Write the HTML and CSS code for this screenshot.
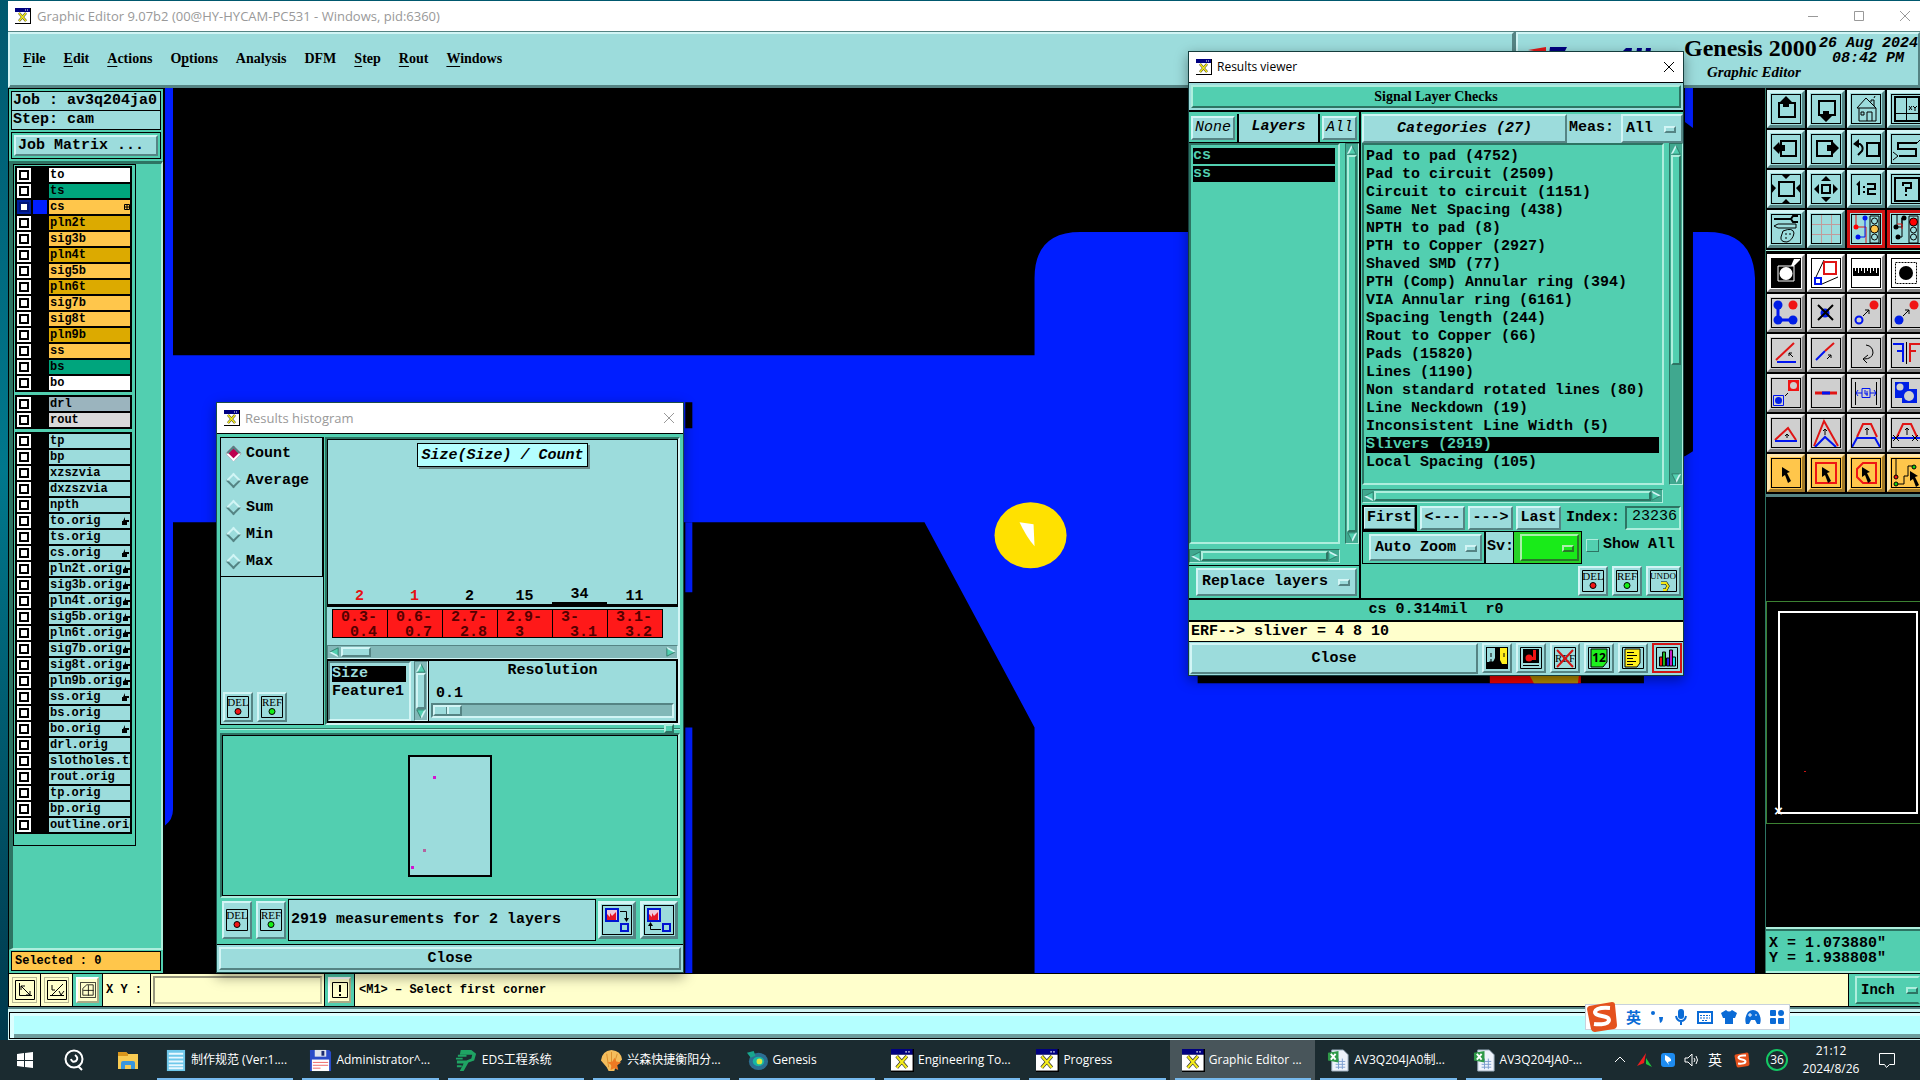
FILE: index.html
```html
<!DOCTYPE html>
<html lang="en">
<head>
    <meta charset="UTF-8">
    <meta name="viewport" content="width=device-width, initial-scale=1.0">
    <title>Graphic Editor</title>
    <link rel="stylesheet" href="styles.css">
</head>
<body>
    <!-- shared icons -->
    <svg class="defs" aria-hidden="true">
        <symbol id="x-app" viewBox="0 0 16 16"><path d="M0 0h16v16H0z" fill="#000"/><path d="M0 0h15v4H0z" fill="#000080"/><path d="M10 2h1m1 0h1" stroke="#fff"/><path d="M0 4h15v11H0z" fill="#fff"/><path d="M4 5l7 8M11 5l-7 8" stroke="#333" stroke-width="2.500"/><path d="M4 5l7 8M11 5l-7 8" stroke="#f5ec1a" stroke-width="1.500"/></symbol>
        <symbol id="del" viewBox="0 0 22 22"><path d="M.5.5h21v21H.5z" fill="none" stroke="#000"/><text x="11" y="10" class="tiny">DEL</text><circle cx="11" cy="15.500" r="3" fill="#f01414" stroke="#000"/></symbol>
        <symbol id="ref" viewBox="0 0 22 22"><path d="M.5.5h21v21H.5z" fill="none" stroke="#000"/><text x="11" y="10" class="tiny">REF</text><circle cx="11" cy="15.500" r="3" fill="#14f014" stroke="#000"/></symbol>
        <symbol id="tri" viewBox="0 0 12 12"><path d="M6 1l5 10H1z" class="tri-face"/><path d="M6 1L1 11" class="tri-light"/><path d="M6 1l5 10H1" class="tri-dark"/></symbol>
        <symbol id="arrow" viewBox="0 0 30 30"><path d="M11 9l8 5-3 1 4 8-3 2-3-8-3 2z"/></symbol>
        <symbol id="hand" viewBox="0 0 8 8"><path d="M4 0v3h4v2H6v3H1V4h1z"/></symbol>
        <symbol id="grid-mark" viewBox="0 0 6 6"><path d="M.5.5h5v5h-5zM3 0v6M0 3h6" fill="none" stroke="#000"/></symbol>
        <symbol id="sogou" viewBox="0 0 32 32"><path d="M3 5l23-4q3 0 3 3l2 20q0 3-3 4L9 31q-3 0-4-3L1 8q0-2 2-3z" fill="#e4511d"/><path d="M24 7q-14-1-15 4c0 5 14 3 14 8 0 6-15 4-15 4" fill="none" stroke="#fff" stroke-width="4"/></symbol>
        <symbol id="excel" viewBox="0 0 24 24"><path d="M5 1h12l5 5v17H5z" fill="#eef3fb" stroke="#9ab"/><path d="M9 13h10M9 16h10M9 19h10M12 10v11M16 10v11" stroke="#7d9fd0"/><path d="M1 4l11-2v12L1 12z" fill="#2f9a48"/><path d="M4 5l5 6M9 5l-5 6" stroke="#fff" stroke-width="2"/></symbol>
    </svg>

    <div class="desktop">
        <main class="app">
            <header class="title-bar">
                <svg class="app-icon"><use href="#x-app"/></svg>
                <span class="caption">Graphic Editor 9.07b2 (00@HY-HYCAM-PC531 - Windows, pid:6360)</span>
                <button class="win-btn" aria-label="Minimize"><svg viewBox="0 0 12 12"><path d="M1 6.500h10"/></svg></button>
                <button class="win-btn" aria-label="Maximize"><svg viewBox="0 0 12 12"><path d="M1.500 1.500h9v9h-9z"/></svg></button>
                <button class="win-btn" aria-label="Close"><svg viewBox="0 0 12 12"><path d="M1 1l10 10M11 1L1 11"/></svg></button>
            </header>

            <div class="top">
                <nav class="menu bevel">
                    <a href="#"><u>F</u>ile</a>
                    <a href="#"><u>E</u>dit</a>
                    <a href="#"><u>A</u>ctions</a>
                    <a href="#">O<u>p</u>tions</a>
                    <a href="#">Analysis</a>
                    <a href="#">DFM</a>
                    <a href="#"><u>S</u>tep</a>
                    <a href="#"><u>R</u>out</a>
                    <a href="#"><u>W</u>indows</a>
                </nav>
                <div class="brand bevel">
                    <svg class="logo" viewBox="0 0 160 30"><path d="M4 3L22 0v10H8l8-5z" fill="#e01818"/><path d="M26 0h17l-2 4H32v4h9v4H31v10h-8z" fill="#000080"/><path d="M98 5l4-4h6l-3 22h-6zM113 1h5l-3 22h-5zM122 1h5l-3 22h-5z" fill="#000080"/></svg>
                    <div class="product">
                        <h1>Genesis 2000</h1>
                        <p>Graphic Editor</p>
                    </div>
                    <div class="date"><p>26 Aug 2024</p><p>08:42 PM</p></div>
                </div>
            </div>

            <div class="work">
                <aside class="side">
                    <div class="job">
                        <p class="field">Job : av3q204ja0</p>
                        <p class="field">Step: cam</p>
                        <div class="matrix"><button class="btn">Job Matrix ...</button></div>
                    </div>
                    <div class="layers-area">
                        <div class="layers" id="layers"></div>
                    </div>
                    <p class="selected">Selected : 0</p>
                </aside>

                <svg class="canvas" viewBox="0 0 1599 885" preserveAspectRatio="xMinYMin slice">
                    <path d="M0 0h8v267h861V190q0-46 46-46h626q46 0 48 46v695H869V639L759 434H8v287q0 10-8 16z" fill="#001eff"/>
                    <path d="M1060 0h467v363l-8 5h-459z"/>
                    <path d="M1519 0h8v40l-8-6zM520 504h7v-70h-7zM520 639h7v246h-7z" fill="#001eff"/>
                    <path d="M520 314h7v26h-7zM1032 580h446v15h-446z"/>
                    <path d="M1324 580h91v15h-91z" fill="#f00000"/>
                    <path d="M1360 580h54l-2 15h-44z" fill="#b48c00"/>
                    <ellipse cx="865" cy="447" rx="36" ry="33" fill="#ffe100"/>
                    <path d="M854 434l14 2 1 22q-8-9-15-24z" fill="#fff"/>
                </svg>

                <aside class="tools">
                    <div class="tool-grid">
                        <button class="tool" aria-label="Pan up"><svg viewBox="0 0 30 30"><path class="s2" d="M8 9h16v14H8z"/><path d="M15 2l6 6-3 1v4h-6V9L9 8z"/></svg></button>
                        <button class="tool" aria-label="Pan down"><svg viewBox="0 0 30 30"><path class="s2" d="M8 7h16v14H8z"/><path d="M15 28l6-6-3-1v-4h-6v4l-3 1z"/></svg></button>
                        <button class="tool" aria-label="Home"><svg viewBox="0 0 30 30"><path class="s1" d="M6 14L15 4l10 10zM8 14v13h17V14M16 27v-9h5v9M10 18h3v3h-3zM20 8V6h3v6M23 4l1-2"/></svg></button>
                        <button class="tool" aria-label="Coordinates"><svg viewBox="0 0 30 30"><path class="s2" d="M4 3h24v24H4z"/><path class="s1" d="M15.500 3v24M4 19.500h24M18 12l3 4m0-4l-3 4M22 12l2 2 2-2M24 14v3"/></svg></button>
                        <button class="tool" aria-label="Pan left"><svg viewBox="0 0 30 30"><path class="s2" d="M10 7h15v15H10z"/><path d="M2 14l6-6 1 3h5v6H9l-1 3z"/></svg></button>
                        <button class="tool" aria-label="Pan right"><svg viewBox="0 0 30 30"><path class="s2" d="M6 7h15v15H6z"/><path d="M28 14l-6-6-1 3h-5v6h5l1 3z"/></svg></button>
                        <button class="tool" aria-label="Previous view"><svg viewBox="0 0 30 30"><path class="s2" d="M16 9h12v13H16zM5 10h4q4 3 2 7l-4 4"/><path d="M2 10l6-5v9z"/></svg></button>
                        <button class="tool" aria-label="Serpentine"><svg viewBox="0 0 30 30"><path class="s2" d="M26 9H7v6h18v7H8"/><path class="s1" d="M30 5l-4 4M2 18l5 4-5 4"/></svg></button>
                        <button class="tool" aria-label="Zoom in"><svg viewBox="0 0 30 30"><path class="s2" d="M8 8h15v14H8z"/><path d="M10 0h10l-5 5zM10 30h10l-5-5zM0 9l5 5-5 6zM30 9l-5 5 5 6z"/></svg></button>
                        <button class="tool" aria-label="Zoom out"><svg viewBox="0 0 30 30"><path class="s2" d="M11 11h8v8h-8z"/><path d="M10 7l5-5 5 5zM10 23l5 5 5-5zM8 10l-5 5 5 5zM22 10l5 5-5 5z"/></svg></button>
                        <button class="tool" aria-label="Scale 1:2"><svg viewBox="0 0 30 30"><path class="s2" d="M6 11l2-2v12M13 12v2m0 3v2M16 10h8v5h-7v5h8"/></svg></button>
                        <button class="tool" aria-label="Help"><svg viewBox="0 0 30 30"><path class="s2" d="M4 4h24v23H4zM12 12V9h8v5h-5v4M15 20v2"/></svg></button>
                        <button class="tool" aria-label="Setup"><svg viewBox="0 0 30 30"><path class="s2" d="M3 5h17M27 2h-5l-2 3 2 3h5"/><path class="s1" d="M3 12l4-2h18v4H7zM12 17q10-4 11 2-1 7-7 9-7 0-6-5zM14 20h2m2 0h2m-6 4h2"/></svg></button>
                        <button class="tool" aria-label="Grid"><svg viewBox="0 0 30 30"><path d="M10.500 0v30M20.500 0v30M0 10.500h30M0 20.500h30" fill="none" stroke="#c29a9a"/></svg></button>
                        <button class="tool red" aria-label="Net check"><svg viewBox="0 0 30 30"><path d="M5 0v13h10v16" fill="none" stroke="#e01414"/><path d="M14 4v19H7" fill="none" stroke="#0014f0"/><circle cx="5" cy="13" r="2.500" fill="#f00"/><circle cx="14" cy="4" r="2.500" fill="#0014f0"/><circle cx="7" cy="23" r="2.500" fill="#0014f0"/><path class="s1" d="M19 2h9v27h-9z"/><circle class="s1" cx="23.500" cy="7" r="3"/><circle cx="23.500" cy="15" r="4" fill="#ffc64b" stroke="#000"/><circle class="s1" cx="23.500" cy="23" r="3"/></svg></button>
                        <button class="tool red" aria-label="Short check"><svg viewBox="0 0 30 30"><path d="M6 0v13h5V4M11 4v19H7" class="s1"/><path d="M6 10h5v5" fill="none" stroke="#e01414"/><circle cx="5" cy="13" r="2.500"/><circle cx="13" cy="4" r="2.500"/><circle cx="7" cy="23" r="2.500"/><path class="s1" d="M18 2h9v27h-9z"/><circle cx="22.500" cy="8" r="4" fill="#f00" stroke="#000"/><circle class="s1" cx="22.500" cy="16" r="3"/><circle class="s1" cx="22.500" cy="23" r="3"/></svg></button>
                    </div>
                    <div class="tool-grid gray">
                        <button class="tool on" aria-label="Add pad"><svg viewBox="0 0 30 30"><path d="M0 0h30v30H0z"/><path d="M20 8l3-7h7l-7 7z" fill="#fff"/><path d="M7 8h16v15H7z" fill="none" stroke="#fff"/><circle cx="15" cy="15.500" r="6.500" fill="#fff"/></svg></button>
                        <button class="tool on" aria-label="Copy"><svg viewBox="0 0 30 30"><path class="s1" d="M5 19L13 2M11 26l16-7"/><path d="M13 4h12v12H13z" fill="none" stroke="#e01414" stroke-width="2"/><path d="M4 20h6v6H4z" fill="none" stroke="#0014f0" stroke-width="2"/></svg></button>
                        <button class="tool on" aria-label="Measure"><svg viewBox="0 0 30 30"><path d="M2 10h26v8H2z"/><path d="M4.500 10v3m3-3v5m3-5v3m3-3v5m3-5v3m3-3v5m3-5v3m3-3v5" stroke="#fff"/></svg></button>
                        <button class="tool on" aria-label="Select pad"><svg viewBox="0 0 30 30"><path class="s1" stroke-dasharray="2 1" d="M4.500 4.500h21v21h-21z"/><circle cx="15" cy="15" r="7"/></svg></button>
                        <button class="tool" aria-label="Chain"><svg viewBox="0 0 30 30"><path d="M7 7v15h16" fill="none" stroke="#0014f0" stroke-width="3"/><g fill="#001ee6"><circle cx="7" cy="7" r="4.500"/><circle cx="7" cy="22" r="4.500"/><circle cx="22" cy="22" r="4.500"/></g><circle cx="22" cy="7" r="4.500" fill="#f01414"/></svg></button>
                        <button class="tool" aria-label="Delete"><svg viewBox="0 0 30 30"><circle cx="14" cy="15" r="4.500" fill="#001ee6"/><path class="s2" d="M7 7l15 15M22 7L7 22"/></svg></button>
                        <button class="tool" aria-label="Move"><svg viewBox="0 0 30 30"><circle cx="8" cy="22" r="3.500" fill="none" stroke="#0014f0" stroke-width="2"/><circle cx="23" cy="7" r="4.500" fill="#f01414"/><path class="s1" d="M12 18l6-6m-4 0h4v4"/></svg></button>
                        <button class="tool" aria-label="Copy pad"><svg viewBox="0 0 30 30"><circle cx="8" cy="22" r="4.500" fill="#001ee6"/><circle cx="23" cy="7" r="4.500" fill="#f01414"/><path class="s1" d="M12 18l6-6m-4 0h4v4"/></svg></button>
                        <button class="tool" aria-label="Rotate"><svg viewBox="0 0 30 30"><path d="M5 22L23 5" stroke="#e01414" stroke-width="2"/><path d="M6 24h19" stroke="#0014f0" stroke-width="2"/><path class="s1" d="M22 19l-4-4m0 3v-3h3"/></svg></button>
                        <button class="tool" aria-label="Extend"><svg viewBox="0 0 30 30"><path d="M5 22l9-9" stroke="#0014f0" stroke-width="2"/><path d="M14 13l9-8" stroke="#e01414" stroke-width="2"/><path class="s1" d="M16 21l4-4m-3 0h3v3"/></svg></button>
                        <button class="tool" aria-label="Turn"><svg viewBox="0 0 30 30"><path class="s1" d="M15 7q7 1 7 8-1 6-9 6m4-4l-5 4 4 4"/></svg></button>
                        <button class="tool" aria-label="Mirror"><svg viewBox="0 0 30 30"><path d="M2 6h10v18M6 13h6" fill="none" stroke="#0014f0" stroke-width="2"/><path class="s1" d="M15.500 4v22"/><path d="M29 6H19v18M19 13h6" fill="none" stroke="#e01414" stroke-width="2"/></svg></button>
                        <button class="tool" aria-label="Resize"><svg viewBox="0 0 30 30"><path d="M17 2h11v11H17z" fill="#f01414"/><circle cx="22.500" cy="7.500" r="3.500" fill="#cfcfcf"/><path d="M2.500 17.500h10v10h-10z" fill="none" stroke="#0014f0"/><circle cx="7.500" cy="22.500" r="3.500" fill="#001ee6"/><path class="s1" d="M14 18l3-3"/></svg></button>
                        <button class="tool" aria-label="Line"><svg viewBox="0 0 30 30"><path d="M4 15h22" stroke="#e01414" stroke-width="3"/><path d="M11 15h8" stroke="#0014f0" stroke-width="3"/></svg></button>
                        <button class="tool" aria-label="Spacing"><svg viewBox="0 0 30 30"><path class="s1" d="M4.500 4v23M25.500 4v23"/><path d="M5 15h6m-4-3l-2 3 2 3M25 15h-6m4-3l2 3-2 3M11 10.500h8v9h-8zM14 12v4h3M16 13v5" fill="none" stroke="#0014f0"/></svg></button>
                        <button class="tool" aria-label="Contour"><svg viewBox="0 0 30 30"><path d="M4 4h14v7h8v14H11v-5H4z" fill="#001ee6"/><circle cx="9" cy="9" r="3.500" fill="#cfcfcf"/><circle cx="18" cy="18" r="5" fill="#cfcfcf"/></svg></button>
                        <button class="tool" aria-label="Angle"><svg viewBox="0 0 30 30"><path d="M4 22L17 10l8 12" fill="none" stroke="#e01414" stroke-width="2"/><path d="M4 23h22" stroke="#0014f0" stroke-width="2"/><path class="s1" d="M16 20v-4m-2 2l2-2 2 2"/></svg></button>
                        <button class="tool" aria-label="Peak"><svg viewBox="0 0 30 30"><path d="M3 28L13 3l14 25" fill="none" stroke="#e01414" stroke-width="2"/><path d="M4 29l10-10 11 10" fill="none" stroke="#0014f0" stroke-width="2"/><path class="s1" d="M14 17v-6m-2 2l2-2 2 2"/></svg></button>
                        <button class="tool" aria-label="Trapezoid"><svg viewBox="0 0 30 30"><path d="M6 19l6-13h8l6 13" fill="none" stroke="#e01414" stroke-width="2"/><path d="M1 29l5-9h18l5 9" fill="none" stroke="#0014f0" stroke-width="2"/><path class="s1" d="M16 17v-7m-2 2l2-2 2 2"/></svg></button>
                        <button class="tool" aria-label="Cut trapezoid"><svg viewBox="0 0 30 30"><path d="M6 19l6-13h8l6 13" fill="none" stroke="#e01414" stroke-width="2"/><path d="M1 20h28" stroke="#0014f0" stroke-width="2"/><path class="s1" d="M16 17v-7m-2 2l2-2 2 2M2 17l6 6m0-6l-6 6M21 17l6 6m0-6l-6 6"/></svg></button>
                        <button class="tool amber" aria-label="Select"><svg viewBox="0 0 30 30"><use href="#arrow"/></svg></button>
                        <button class="tool amber" aria-label="Select in box"><svg viewBox="0 0 30 30"><path d="M5 5h20v20H5z" fill="none" stroke="#f01414" stroke-width="2"/><use href="#arrow"/></svg></button>
                        <button class="tool amber" aria-label="Select in polygon"><svg viewBox="0 0 30 30"><path d="M12 5h13v20H12l-6-6v-8z" fill="none" stroke="#f01414" stroke-width="2"/><use href="#arrow"/></svg></button>
                        <button class="tool amber" aria-label="Select net"><svg viewBox="0 0 30 30"><path class="s1" d="M5 0v18M5 26h8v-8h4V8h6"/><circle cx="5" cy="19" r="2" fill="#f01414" stroke="#000"/><circle cx="5" cy="26" r="2" fill="#14d214" stroke="#000"/><circle cx="23" cy="9" r="2" fill="#14d214" stroke="#000"/><use href="#arrow" x="8" y="4"/></svg></button>
                    </div>
                    <div class="overview">
                        <div class="overview-view"><div class="board"><i></i></div></div>
                    </div>
                    <div class="coords"><p>X = 1.073880"</p><p>Y = 1.938808"</p></div>
                </aside>
            </div>

            <div class="status">
                <button class="mini" aria-label="Rectangle"><svg viewBox="0 0 20 20"><path class="s1" d="M.5.5h19v19H.5zM4.500 3v12.500H17M6 6l9 9M6 10V6h4M15 11v4h-4"/></svg></button>
                <button class="mini" aria-label="Angle"><svg viewBox="0 0 20 20"><path class="s1" d="M.5.5h19v19H.5zM3 15.500h14M4 16L16 4M5 5v5h3M12 11l2 4 3-4"/></svg></button>
                <span class="framed"><button class="mini" aria-label="Snap"><svg viewBox="0 0 20 20"><path class="s1" d="M.5.5h19v19H.5zM3.500 8l5-4.500h8v13h-13zM10.500 4v13M4 10.500h13"/></svg></button></span>
                <label for="xy">X Y :</label>
                <div class="xy-box"><input id="xy" type="text"></div>
                <span class="framed"><button class="mini" aria-label="Alert"><svg viewBox="0 0 16 16"><path class="s1" d="M.5.5h15v15H.5z"/><path class="s2" d="M8 3v7M8 12v2"/></svg></button></span>
                <p class="message">&lt;M1&gt; – Select first corner</p>
                <div class="units opt"><select aria-label="Units"><option>Inch</option></select></div>
            </div>
            <div class="info"><div></div></div>
        </main>

        <section class="window histogram">
            <header class="title-bar">
                <svg class="app-icon"><use href="#x-app"/></svg>
                <span class="caption">Results histogram</span>
                <button class="win-btn" aria-label="Close"><svg viewBox="0 0 12 12"><path d="M1 1l10 10M11 1L1 11"/></svg></button>
            </header>
            <div class="hist-body">
                <div class="hist-top">
                    <div class="stats">
                        <div class="radios">
                            <label><input type="radio" name="stat" checked>Count</label>
                            <label><input type="radio" name="stat">Average</label>
                            <label><input type="radio" name="stat">Sum</label>
                            <label><input type="radio" name="stat">Min</label>
                            <label><input type="radio" name="stat">Max</label>
                        </div>
                        <div class="pair">
                            <button class="sq" aria-label="Delete"><svg><use href="#del"/></svg></button>
                            <button class="sq" aria-label="Reference"><svg><use href="#ref"/></svg></button>
                        </div>
                    </div>
                    <div class="chart">
                        <div class="plot">
                            <h2>Size(Size) / Count</h2>
                            <div class="counts">
                                <span class="bad">2</span><span class="bad">1</span><span>2</span><span>15</span><span class="top-bar">34</span><span>11</span>
                            </div>
                        </div>
                        <div class="ranges">
                            <span>0.3-
 0.4</span><span>0.6-
 0.7</span><span>2.7-
 2.8</span><span>2.9-
 3</span><span>3-
 3.1</span><span>3.1-
 3.2</span>
                        </div>
                        <div class="sb cyan short"><svg class="left"><use href="#tri"/></svg><i></i><svg class="right"><use href="#tri"/></svg></div>
                        <div class="params">
                            <ul class="list">
                                <li class="sel">Size</li>
                                <li>Feature1</li>
                            </ul>
                            <div class="sb vert cyan"><svg><use href="#tri"/></svg><i></i><svg class="down"><use href="#tri"/></svg></div>
                            <div class="resolution">
                                <label for="res">Resolution</label>
                                <output for="res">0.1</output>
                                <input id="res" type="range" min="0" max="10" value="0">
                            </div>
                        </div>
                    </div>
                </div>
                <div class="sash"><i></i></div>
                <div class="map">
                    <svg viewBox="0 0 84 122"><path d="M1 1h82v120H1z" fill="#9cdcdc" stroke="#000" stroke-width="2"/><path d="M25 21h3v3h-3zM3 111h3v3H3z" fill="#d214d2"/><path d="M15 94h3v3h-3z" fill="#b464a0"/></svg>
                </div>
                <div class="summary">
                    <button class="sq tall" aria-label="Delete"><svg><use href="#del"/></svg></button>
                    <button class="sq tall" aria-label="Reference"><svg><use href="#ref"/></svg></button>
                    <p>2919 measurements for 2 layers</p>
                    <button class="tool" aria-label="Copy to layer"><svg viewBox="0 0 30 30"><path d="M4 4h12v12H4z" fill="#f0c8dc" stroke="#0014d2" stroke-width="2"/><path d="M5 15V9l3 3V8l2 3 4-4v8z" fill="#e61428"/><path class="s1" d="M18 6.500h6.500V15"/><path d="M22 13h5l-2.500 4z"/><path d="M19 19h7v7h-7z" fill="none" stroke="#0014d2" stroke-width="2"/></svg></button>
                    <button class="tool" aria-label="Copy from layer"><svg viewBox="0 0 30 30"><path d="M4 4h12v12H4z" fill="#f0c8dc" stroke="#0014d2" stroke-width="2"/><path d="M5 15V9l3 3V8l2 3 4-4v8z" fill="#e61428"/><path class="s1" d="M17 24.500H6.500V19"/><path d="M4 21h5l-2.500-4z"/><path d="M19 19h7v7h-7z" fill="none" stroke="#0014d2" stroke-width="2"/></svg></button>
                </div>
            </div>
            <div class="close-row"><button class="btn">Close</button></div>
        </section>

        <section class="window viewer">
            <header class="title-bar active">
                <svg class="app-icon"><use href="#x-app"/></svg>
                <span class="caption">Results viewer</span>
                <button class="win-btn" aria-label="Close"><svg viewBox="0 0 12 12"><path d="M1 1l10 10M11 1L1 11"/></svg></button>
            </header>
            <div class="check-name"><button class="btn">Signal Layer Checks</button></div>
            <div class="columns">
                <div class="layer-col">
                    <div class="col-head">
                        <button class="btn thin">None</button>
                        <strong>Layers</strong>
                        <button class="btn thin">All</button>
                    </div>
                    <div class="list-row">
                        <ul class="list">
                            <li class="sel">cs</li>
                            <li class="sel">ss</li>
                        </ul>
                        <div class="sb vert"><svg><use href="#tri"/></svg><i></i><svg class="down"><use href="#tri"/></svg></div>
                    </div>
                    <div class="sb"><svg class="left"><use href="#tri"/></svg><i></i><svg class="right"><use href="#tri"/></svg></div>
                    <div class="replace"><div class="opt"><select aria-label="Replace mode"><option>Replace layers</option></select></div></div>
                </div>
                <div class="cat-col">
                    <div class="col-head">
                        <button class="btn">Categories (27)</button>
                        <label for="meas">Meas:</label>
                        <div class="opt"><select id="meas"><option>All</option></select></div>
                    </div>
                    <div class="list-row">
                        <ul class="list">
                            <li>Pad to pad (4752)</li>
                            <li>Pad to circuit (2509)</li>
                            <li>Circuit to circuit (1151)</li>
                            <li>Same Net Spacing (438)</li>
                            <li>NPTH to pad (8)</li>
                            <li>PTH to Copper (2927)</li>
                            <li>Shaved SMD (77)</li>
                            <li>PTH (Comp) Annular ring (394)</li>
                            <li>VIA Annular ring (6161)</li>
                            <li>Spacing length (244)</li>
                            <li>Rout to Copper (66)</li>
                            <li>Pads (15820)</li>
                            <li>Lines (1190)</li>
                            <li>Non standard rotated lines (80)</li>
                            <li>Line Neckdown (19)</li>
                            <li>Inconsistent Line Width (5)</li>
                            <li class="sel">Slivers (2919)</li>
                            <li>Local Spacing (105)</li>
                        </ul>
                        <div class="sb vert part"><svg><use href="#tri"/></svg><i></i><svg class="down"><use href="#tri"/></svg></div>
                    </div>
                    <div class="sb"><svg class="left"><use href="#tri"/></svg><i></i><svg class="right"><use href="#tri"/></svg></div>
                    <div class="steps">
                        <button class="btn default">First</button>
                        <button class="btn">&lt;---</button>
                        <button class="btn">---&gt;</button>
                        <button class="btn">Last</button>
                        <label for="index">Index:</label>
                        <input id="index" type="text" value="23236">
                    </div>
                    <div class="zoom-row">
                        <div class="opt"><select aria-label="Zoom mode"><option>Auto Zoom</option></select></div>
                        <label for="sv">Sv:</label>
                        <div class="opt green"><select id="sv"><option></option></select></div>
                        <label class="show"><input type="checkbox">Show All</label>
                    </div>
                    <div class="pair">
                        <button class="sq" aria-label="Delete"><svg><use href="#del"/></svg></button>
                        <button class="sq" aria-label="Reference"><svg><use href="#ref"/></svg></button>
                        <button class="sq wide" aria-label="Undo"><svg viewBox="0 0 27 22"><path class="s1" d="M.5.5h26v21H.5z"/><text x="13" y="9" class="tiny small">UNDO</text><path d="M11 13h5l2 3-2 4h-3" fill="none" stroke="#000" stroke-width="3"/><path d="M11 13h5l2 3-2 4h-3" fill="none" stroke="#f5e614" stroke-width="2"/></svg></button>
                    </div>
                </div>
            </div>
            <p class="result">cs 0.314mil  r0</p>
            <p class="erf">ERF--&gt; sliver = 4 8 10</p>
            <div class="foot">
                <button class="btn">Close</button>
                <button class="sq" aria-label="Contrast"><svg viewBox="0 0 22 22"><path d="M0 0h22v22H0z"/><path d="M1 1h8v10l-2 4H1z" fill="#9cdcdc"/><path d="M14 1h7v16h-5l-2-4z" fill="#fff01e"/><path d="M5 6v4m-2 5h5m-3-3v4M18 6v4" stroke="#000"/></svg></button>
                <button class="sq" aria-label="Marker"><svg viewBox="0 0 22 22"><path class="s1" d="M.5.5h21v21H.5z"/><path d="M3 2h16v14H3z"/><circle cx="9" cy="11" r="3.500" fill="#f01414"/><path d="M13 3h3v10h-7v-3h4z" fill="#f01414"/><path class="s1" d="M3 18.500h16"/></svg></button>
                <button class="sq" aria-label="Clear references"><svg viewBox="0 0 22 22"><path class="s1" d="M.5.5h21v21H.5z"/><text x="11" y="15" class="tiny">REF</text><path d="M3 3l16 17M19 3L3 20" stroke="#d21414" stroke-width="2"/></svg></button>
                <button class="sq" aria-label="Count"><svg viewBox="0 0 22 22"><path d="M.5.5h21v21H.5z" class="s1"/><path d="M3 2h16v13l-4 5H3z" fill="#1ef01e" stroke="#000"/><text x="11" y="15" class="tiny num">12</text></svg></button>
                <button class="sq" aria-label="Notes"><svg viewBox="0 0 22 22"><path d="M.5.5h21v21H.5z" class="s1"/><path d="M3 2h15v14l-3 4H3z" fill="#fff01e" stroke="#000"/><path class="s1" d="M5 5.500h7M5 8.500h10M5 11.500h6M5 14.500h9M5 17.500h6"/></svg></button>
                <button class="sq red" aria-label="Histogram"><svg viewBox="0 0 22 22"><path d="M.5.5h21v21H.5z" class="s1"/><g stroke="#000"><path d="M3.500 10h3v9h-3z" fill="#f01414"/><path d="M6.500 5h3v14h-3z" fill="#1eb41e"/><path d="M10.500 11h3v8h-3z" fill="#1e1ee6"/><path d="M13.500 3h3v16h-3z" fill="#c81ec8"/><path d="M16.500 10h3v9h-3z" fill="#1ee6f0"/></g></svg></button>
            </div>
        </section>

        <div class="ime">
            <svg class="ime-logo"><use href="#sogou"/></svg>
            <span>英</span>
            <svg viewBox="0 0 16 16"><circle cx="4" cy="4" r="2"/><path d="M10 8h4q0 5-3 6z"/></svg>
            <svg viewBox="0 0 16 16"><rect x="5" y="0" width="6" height="10" rx="3"/><path d="M3 7q1 5 5 5t5-5M8 12v4" fill="none" stroke="#0a6bd6" stroke-width="2"/></svg>
            <svg viewBox="0 0 16 16"><path d="M1 3h14v11H1z" fill="none" stroke="#0a6bd6" stroke-width="2"/><path d="M3 6.500h10M3 9h10M5 11.500h6" stroke="#0a6bd6" stroke-dasharray="2 1"/></svg>
            <svg viewBox="0 0 16 16"><path d="M5 1q3 3 6 0l5 3-2 5h-2v6H4V9H2L0 4z"/></svg>
            <svg viewBox="0 0 16 16"><path d="M3 3q5-4 10 0 4 6 2 12h-3l-2-4H6l-2 4H1Q-1 9 3 3z"/><path d="M5 4v4M3 6h4M10 6h2" stroke="#fff"/></svg>
            <svg viewBox="0 0 16 16"><rect x="1" y="1" width="6" height="6" rx="1"/><rect x="9" y="1" width="6" height="6" rx="3"/><rect x="1" y="9" width="6" height="6" rx="1"/><rect x="9" y="9" width="6" height="6" rx="1"/></svg>
        </div>
    </div>

    <footer class="taskbar">
        <button class="task-icon" aria-label="Start"><svg viewBox="0 0 16 16" fill="#fff"><path d="M0 2l7-1v7H0zM8 1l8-1v8H8zM0 9h7v6l-7-1zM8 9h8v7l-8-1z"/></svg></button>
        <button class="task-icon" aria-label="Search"><svg viewBox="0 0 22 22" fill="none" stroke="#fff" stroke-width="2"><circle cx="11" cy="10" r="8.500"/><path d="M15 17l4 4M12 6q4 3 1 6-4 2-5-2"/></svg></button>
        <button class="task-icon wide" aria-label="Explorer"><svg viewBox="0 0 22 22"><path d="M1 3h8l2 2h10v15H1z" fill="#f8cb52"/><path d="M1 3h8l2 2v2H1z" fill="#d9961c"/><path d="M4 20v-6q0-2 2-2h10q2 0 2 2v6h-4v-4H8v4z" fill="#3a96dd"/></svg></button>
        <div class="tasks">
            <button class="task"><svg viewBox="0 0 24 24"><path d="M3 1h19v22H3z" fill="#6fc8ea"/><path d="M5 5h15M5 9h15M5 13h15M5 17h15M5 20h15" stroke="#e9f8ff" stroke-width="2"/></svg><span>制作规范 (Ver:1....</span></button>
            <button class="task"><svg viewBox="0 0 24 24"><path d="M1 1h20l2 2v20H1z" fill="#2a4bc8"/><path d="M6 1h12v7H6z" fill="#dfe4ee"/><path d="M13 2h3v5h-3z" fill="#1c2c70"/><path d="M3 11h18v12H3z" fill="#fff"/><path d="M4 14h16M4 17h16M4 20h8" stroke="#e66"/></svg><span>Administrator^...</span></button>
            <button class="task"><svg viewBox="0 0 24 24"><path d="M6 1h11l5 4-2 7-6 2-5 9H5l4-8H2v-3h10l5-2 1-4H5z" fill="#1fa463"/><path d="M3 7h9M1 10h7M2 18h5" stroke="#1fa463" stroke-width="2"/></svg><span>EDS工程系统</span></button>
            <button class="task"><svg viewBox="0 0 24 24"><path d="M12 1q10 1 11 10l-7 8-1 4H9l-2-4-6-7Q2 2 12 1z" fill="#f4bd5c"/><path d="M9 19L7 5M12 18V3M14 18l4-13" stroke="#d98e2c"/><path d="M15 9l2 4 5 1-4 3 1 5-4-2-4 2 1-5-4-3 5-1z" fill="#ee7a23"/></svg><span>兴森快捷衡阳分...</span></button>
            <button class="task"><svg viewBox="0 0 24 24"><ellipse cx="13" cy="13" rx="10" ry="9" fill="#2c6f93"/><ellipse cx="13" cy="13" rx="6" ry="5" fill="#17b6a4"/><circle cx="14" cy="13" r="3" fill="#d8e640"/><path d="M1 4l7-2 2 5-5 2z" fill="#18a58d"/></svg><span>Genesis</span></button>
            <button class="task"><svg><use href="#x-app"/></svg><span>Engineering To...</span></button>
            <button class="task"><svg><use href="#x-app"/></svg><span>Progress</span></button>
            <button class="task current"><svg><use href="#x-app"/></svg><span>Graphic Editor ...</span></button>
            <button class="task"><svg><use href="#excel"/></svg><span>AV3Q204JA0制...</span></button>
            <button class="task"><svg><use href="#excel"/></svg><span>AV3Q204JA0-...</span></button>
        </div>
        <div class="tray">
            <svg viewBox="0 0 16 16"><path d="M3 10l5-5 5 5" fill="none" stroke="#fff"/></svg>
            <svg viewBox="0 0 16 16"><path d="M10 1L1 14l7-3z" fill="#f01e1e"/><path d="M10 6l6 9-6-3z" fill="#1ec83c"/></svg>
            <svg viewBox="0 0 16 16"><rect x="1" y="1" width="14" height="14" rx="3" fill="#1e8cf0"/><path d="M5 3q7 3 6 6l-3 1 1 3-4-5z" fill="#fff"/></svg>
            <svg viewBox="0 0 16 16" fill="none" stroke="#fff"><path d="M1 6h3l4-4v12l-4-4H1zM10 6q2 2 0 4M12 4q3 4 0 8"/></svg>
            <span>英</span>
            <svg viewBox="0 0 32 32"><use href="#sogou"/></svg>
            <b>36</b>
            <div class="clock"><p>21:12</p><p>2024/8/26</p></div>
            <svg viewBox="0 0 18 18" fill="none" stroke="#fff"><path d="M1.500 2.500h15v11h-5l-3 3-2-3h-5z"/></svg>
        </div>
    </footer>

    <script>
        // name, background class, marker
        const groups = [
            [['to', 'white'], ['ts', 'mask'], ['cs', 'signal', 'grid-mark'], ['pln2t', 'plane'], ['sig3b', 'signal'],
             ['pln4t', 'plane'], ['sig5b', 'signal'], ['pln6t', 'plane'], ['sig7b', 'signal'], ['sig8t', 'signal'],
             ['pln9b', 'plane'], ['ss', 'signal'], ['bs', 'mask'], ['bo', 'white']],
            [['drl', 'drill'], ['rout', 'rout']],
            [['tp'], ['bp'], ['xzszvia'], ['dxzszvia'], ['npth'], ['to.orig', '', 'hand'], ['ts.orig'], ['cs.orig', '', 'hand'],
             ['pln2t.orig', '', 'hand'], ['sig3b.orig', '', 'hand'], ['pln4t.orig', '', 'hand'], ['sig5b.orig', '', 'hand'],
             ['pln6t.orig', '', 'hand'], ['sig7b.orig', '', 'hand'], ['sig8t.orig', '', 'hand'], ['pln9b.orig', '', 'hand'],
             ['ss.orig', '', 'hand'], ['bs.orig'], ['bo.orig', '', 'hand'], ['drl.orig'], ['slotholes.txt'], ['rout.orig'],
             ['tp.orig'], ['bp.orig'], ['outline.orig']]
        ];

        document.getElementById('layers').innerHTML = groups.map(rows =>
            '<div class="layer-group">' + rows.map(([name, kind = '', mark]) => `
                <label class="layer ${name === 'cs' ? 'work-layer' : ''}">
                    <input type="checkbox"><i></i>
                    <span class="${kind}">${name}${mark ? `<svg class="${mark}"><use href="#${mark}"/></svg>` : ''}</span>
                </label>`).join('') + '</div>').join('');
    </script>
</body>
</html>
```
FILE: styles.css
```css
:root {
    --cyan: #9cdcdc;
    --cyan-light: #d2f5f5;
    --cyan-dark: #558484;
    --green: #52cfb0;
    --green-light: #aeeedd;
    --green-dark: #2d7463;
    --cream: #ffffcc;
    --amber: #ffc64b;
    --mono: "Liberation Mono", monospace;
    --serif: "Liberation Serif", serif;
    --ui: "Open Sans", "Noto Sans CJK SC", sans-serif;
}

*, *::before, *::after {
    margin: 0;
    padding: 0;
    box-sizing: border-box;
}

body {
    height: 100vh;
    display: flex;
    flex-direction: column;
    overflow: hidden;
    font: bold 15px/18px var(--mono);
    color: #000;
    background: #1b2b30;
}

button, input, select {
    font: inherit;
    color: inherit;
    background: none;
    border: 0;
    border-radius: 0;
    appearance: none;
}

ul {
    list-style: none;
}

svg {
    display: block;
    flex: none;
}

.defs {
    display: none;
}

.s1 {
    fill: none;
    stroke: #000;
}

.s2 {
    fill: none;
    stroke: #000;
    stroke-width: 2;
}

.tiny {
    font: 11px var(--serif);
    text-anchor: middle;
}

.small {
    font-size: 9px;
}

.num {
    font: bold 12px var(--ui);
}

.desktop {
    flex: 1;
    min-height: 0;
    position: relative;
    display: flex;
    padding: 1px 0 0 8px;
    background: linear-gradient(#00586e, #00788c 45%, #00384c);
}

/* main window */
.app {
    flex: 1;
    min-width: 0;
    display: flex;
    flex-direction: column;
    overflow: hidden;
    background: #000;
}

.title-bar {
    height: 30px;
    display: flex;
    align-items: center;
    gap: 5px;
    padding: 0 0 0 7px;
    background: #fff;
    color: #999;
    font: 13px/18px var(--ui);
}

.title-bar.active {
    color: #000;
    font-size: 12px;
}

.app > .title-bar {
    gap: 6px;
}

.caption {
    flex: 1;
}

.app-icon {
    width: 16px;
    height: 16px;
}

.win-btn {
    width: 40px;
    height: 30px;
    display: grid;
    place-items: center;
}

.app .win-btn:last-child {
    margin-right: -5px;
}

.win-btn svg {
    width: 12px;
    height: 12px;
    fill: none;
    stroke: currentColor;
}

.window .win-btn {
    width: 28px;
}

.top {
    display: flex;
    height: 57px;
    padding-top: 1px;
    gap: 2px;
    background: var(--cyan-dark);
}

.bevel {
    border: 2px solid;
    border-color: var(--cyan-light) var(--cyan-dark) var(--cyan-dark) var(--cyan-light);
    box-shadow: inset 0 -1px var(--cyan-dark);
    background: var(--cyan);
}

.menu {
    flex: 1;
    display: flex;
    align-items: center;
    gap: 18px;
    padding: 0 0 2px 13px;
    font: bold 14px/18px var(--serif);
}

.menu a {
    color: #000;
    text-decoration: none;
}

.menu u {
    text-underline-offset: 3px;
}

.brand {
    width: 404px;
    display: flex;
    overflow: hidden;
    padding-left: 6px;
}

.logo {
    width: 160px;
    height: 30px;
    margin-top: 13px;
}

.product {
    width: 148px;
    white-space: nowrap;
}

.product h1 {
    font: bold 24px/28px var(--serif);
}

.product p {
    padding-left: 23px;
    font: italic bold 15px/20px var(--serif);
}

.date {
    padding-top: 2px;
    font-style: italic;
    line-height: 15px;
    white-space: nowrap;
}

.date p + p {
    padding-left: 13px;
}

.work {
    flex: 1;
    min-height: 0;
    display: flex;
}

.side {
    width: 155px;
    display: flex;
    flex-direction: column;
    background: var(--green);
    border: 1px solid #000;
    border-width: 1px 0 0 1px;
}

.job {
    padding: 2px 2px;
}

.field, .matrix {
    border: 1px solid #000;
    background: var(--cyan);
    white-space: nowrap;
}

.field {
    padding-left: 1px;
}

.field + .field {
    border-top: 0;
}

.matrix {
    margin-top: 2px;
    padding: 2px;
    background: var(--green);
}

.btn {
    border: 2px solid;
    border-color: var(--cyan-light) var(--cyan-dark) var(--cyan-dark) var(--cyan-light);
    background: var(--cyan);
    white-space: nowrap;
}

.matrix .btn {
    width: 100%;
    height: 21px;
    line-height: 17px;
    text-align: left;
    padding-left: 2px;
}

.layers-area {
    flex: 1;
    min-height: 0;
    border: solid;
    border-width: 3px 2px 2px 4px;
    border-color: var(--green-dark) var(--green-light) var(--green-light) var(--green-dark);
}

.layers {
    width: 123px;
    padding: 1px 3px 8px 1px;
    border: 1px solid #000;
    font-size: 12px;
    line-height: 14px;
}

.layer-group {
    border: 1px solid #000;
    background: #000;
    margin-bottom: 3px;
}

.layer {
    display: flex;
    gap: 2px;
    height: 16px;
    padding: 1px;
}

.layer input {
    width: 14px;
    height: 14px;
    border: 2px solid #fff;
    background: #fff;
    box-shadow: inset 0 0 0 2px #000;
}

.layer i {
    width: 14px;
}

.layer span {
    flex: 1;
    min-width: 0;
    display: flex;
    justify-content: space-between;
    align-items: center;
    overflow: hidden;
    padding-left: 1px;
    background: var(--cyan);
}

.hand {
    width: 8px;
    height: 8px;
    margin-right: 1px;
}

.grid-mark {
    width: 6px;
    height: 6px;
}

.layer .white { background: #fff; }
.layer .mask { background: #00a57d; }
.layer .signal { background: var(--amber); }
.layer .plane { background: #dcaa00; }
.layer .drill { background: #9bb4be; }
.layer .rout { background: #d9d9d9; }

.work-layer input {
    border-color: #001ea0;
    box-shadow: inset 0 0 0 2px #001478;
}

.work-layer i {
    background: #001eff;
}

.selected {
    margin: 1px 2px 2px;
    padding-left: 3px;
    border: 1px solid #000;
    background: var(--amber);
    font-size: 12px;
    line-height: 18px;
}

.canvas {
    flex: 1;
    min-width: 0;
    height: 100%;
    padding-left: 2px;
}

.tools {
    width: 155px;
    display: flex;
    flex-direction: column;
    overflow: hidden;
    border-left: 1px solid var(--green-dark);
}

.tool-grid {
    display: grid;
    grid-template-columns: repeat(4, 38px);
    gap: 2px;
    padding: 2px 0 2px 1px;
    border-bottom: 1px solid var(--green-light);
}

.tool-grid.gray {
    padding-top: 3px;
    border-color: var(--cyan-dark);
    border-bottom-width: 3px;
}

.tool {
    width: 38px;
    height: 38px;
    padding: 1px;
    border: 3px solid;
    border-color: var(--cyan-light) var(--cyan-dark) var(--cyan-dark) var(--cyan-light);
    background: var(--cyan);
}

.tool svg {
    width: 30px;
    height: 30px;
    outline: 1px solid #000;
    outline-offset: -1px;
}

.gray .tool {
    background: #cfcfcf;
    border-color: #eee #828282 #828282 #eee;
}

.gray .tool.on {
    background: #fff;
    border-color: #fff #828282 #828282 #fff;
}

.gray .tool.amber {
    background: var(--amber);
    border-color: #ffe6ac #a07828 #a07828 #ffe6ac;
}

.tool.red, .sq.red {
    border-color: #d21414;
}

.overview {
    flex: 1;
    display: flex;
    align-items: center;
}

.overview-view {
    flex: 1;
    height: 223px;
    padding: 9px 2px 9px 11px;
    border: 1px solid #3c8232;
    border-right: 0;
}

.board {
    position: relative;
    height: 203px;
    border: 2px solid #fff;
}

.board::before {
    content: "×";
    position: absolute;
    left: -6px;
    bottom: -10px;
    color: #fff;
    font-size: 15px;
}

.board i {
    position: absolute;
    left: 24px;
    bottom: 40px;
    width: 2px;
    height: 1px;
    background: #c81414;
}

.coords {
    height: 46px;
    padding: 7px 3px;
    line-height: 15px;
    background: var(--green);
    border-top: 2px solid var(--green-light);
    border-bottom: 2px solid var(--green-light);
    box-shadow: inset 0 2px var(--green-dark);
    white-space: nowrap;
}

/* status line */
.status {
    display: flex;
    align-items: stretch;
    height: 34px;
    gap: 1px;
    padding: 1px 0 1px 1px;
    font-size: 12px;
}

.mini {
    width: 31px;
    display: grid;
    place-items: center;
    border: 2px solid var(--cream);
    background: var(--cream);
    outline: 1px solid #b8b894;
    outline-offset: -4px;
}

.mini svg {
    width: 20px;
    height: 20px;
}

.framed {
    width: 29px;
    display: flex;
    padding: 3px;
    background: var(--green);
}

.framed .mini {
    flex: 1;
    outline: 0;
    border-color: #fff #aaaa86 #aaaa86 #fff;
}

.framed .mini svg {
    width: 16px;
    height: 16px;
}

.status label {
    width: 47px;
    padding-left: 3px;
    line-height: 33px;
    background: var(--cream);
}

.xy-box {
    width: 173px;
    display: flex;
    padding: 2px;
    background: var(--cream);
}

.xy-box input {
    flex: 1;
    min-width: 0;
    padding: 0 4px;
    border: 2px solid;
    border-color: #96967c #c8c8a0 #c8c8a0 #96967c;
}

.message {
    flex: 1;
    padding-left: 4px;
    line-height: 33px;
    background: var(--cream);
}

.opt {
    position: relative;
    display: flex;
}

.opt select {
    flex: 1;
    min-width: 0;
    padding: 0 20px 0 7px;
    border: 2px solid;
    border-color: var(--cyan-light) var(--cyan-dark) var(--cyan-dark) var(--cyan-light);
    background: var(--cyan);
}

.opt::after {
    content: "";
    position: absolute;
    right: 7px;
    top: 50%;
    width: 12px;
    height: 7px;
    margin-top: -3px;
    border: 2px solid;
    border-color: var(--cyan-light) var(--cyan-dark) var(--cyan-dark) var(--cyan-light);
    pointer-events: none;
}

.units {
    width: 71px;
    padding: 2px 0 2px 6px;
    background: var(--green);
    font-size: 14px;
}

.units select {
    padding-right: 0;
    padding-left: 4px;
    border-color: var(--green-light) var(--green) var(--green-dark) var(--green-light);
    background: var(--green);
}

.units::after {
    right: 2px;
    border-color: var(--green-light) var(--green-dark) var(--green-dark) var(--green-light);
}

.info {
    height: 33px;
    padding: 3px 0 1px 1px;
    border-top: 2px solid var(--cyan-dark);
    background: var(--cyan-light);
}

.info div {
    height: 27px;
    border: 1px solid #000;
    border-right: 0;
    background: #b4ffff;
    box-shadow: inset 4px 3px #dcffff, inset 0 -4px #6e9c9c;
}

/* floating windows */
.window {
    position: absolute;
    display: flex;
    flex-direction: column;
    border: 1px solid #1c4c48;
    background: var(--cyan);
    box-shadow: 0 4px 12px rgba(0, 0, 0, 0.4);
}

.histogram {
    left: 216px;
    top: 402px;
    width: 468px;
}

.hist-body {
    padding: 3px;
    border-top: 1px solid #000;
    border-bottom: 1px solid #000;
    background: var(--green);
}

.hist-top {
    display: flex;
    gap: 1px;
}

.stats {
    width: 104px;
    display: flex;
    flex-direction: column;
    justify-content: space-between;
    border: 1px solid #000;
    background: var(--cyan);
}

.radios {
    border-bottom: 1px solid #000;
    border-right: 1px solid #000;
    padding: 2px 0 1px 5px;
}

.radios label {
    display: flex;
    align-items: center;
    gap: 7px;
    height: 27px;
}

.radios input {
    width: 11px;
    height: 11px;
    margin-left: 2px;
    transform: rotate(45deg);
    border: 2px solid;
    border-color: var(--cyan-light) var(--cyan-dark) var(--cyan-dark) var(--cyan-light);
}

.radios input:checked {
    background: #be0050;
    border-color: var(--cyan-dark) #fff #fff var(--cyan-dark);
}

.pair {
    display: flex;
    gap: 4px;
    padding: 2px;
}

.sq {
    width: 30px;
    height: 30px;
    display: grid;
    place-items: center;
    border: 2px solid;
    border-color: var(--cyan-light) var(--cyan-dark) var(--cyan-dark) var(--cyan-light);
    background: var(--cyan);
}

.sq svg {
    width: 22px;
    height: 22px;
}

.sq.wide {
    width: 35px;
}

.sq.wide svg {
    width: 27px;
}

.sq.tall {
    height: 38px;
}

.chart {
    flex: 1;
    min-width: 0;
    border: 2px solid;
    border-color: var(--green-dark) var(--cyan-light) var(--cyan-light) var(--green-dark);
    background: var(--cyan);
}

.plot {
    height: 168px;
    display: flex;
    flex-direction: column;
    align-items: center;
    justify-content: space-between;
    padding-top: 3px;
    border: 1px solid #000;
    border-bottom-width: 3px;
}

.plot h2 {
    padding: 2px 3px 0;
    border: 1px solid #000;
    background: #b4ffff;
    box-shadow: 2px 2px #6e8c8c;
    font: italic bold 15px/20px var(--mono);
}

.counts, .ranges {
    display: grid;
    grid-template-columns: repeat(6, 55px);
}

.counts {
    align-self: flex-start;
    align-items: end;
    margin-left: 4px;
    line-height: 14px;
    text-align: center;
}

.counts .bad {
    color: #e61414;
}

.counts .top-bar {
    border-bottom: 2px solid #000;
}

.ranges {
    height: 29px;
    width: 331px;
    margin: 2px 0 7px 5px;
    border-right: 1px solid #000;
    background: #ff1919;
    color: #500;
    line-height: 15px;
}

.ranges span {
    height: 29px;
    padding: 0 0 0 8px;
    border: 1px solid #000;
    border-right: 0;
    white-space: pre;
}

/* scroll bars */
.sb {
    height: 14px;
    display: flex;
    padding: 1px;
    border: 1px solid;
    border-color: var(--green-dark) var(--green-light) var(--green-light) var(--green-dark);
    background: #40a88f;
}

.sb svg {
    width: 10px;
    height: 10px;
}

.sb i {
    flex: 1;
    border: 2px solid;
    border-color: var(--green-light) var(--green-dark) var(--green-dark) var(--green-light);
    background: var(--green);
}

.sb.vert {
    width: 14px;
    height: auto;
    flex-direction: column;
}

.sb .left { transform: rotate(-90deg); }
.sb .right { transform: rotate(90deg); }
.sb .down { transform: rotate(180deg); }

.sb.cyan {
    border-color: var(--cyan-dark) var(--cyan-light) var(--cyan-light) var(--cyan-dark);
    background: #82b8b8;
}

.sb.cyan i {
    border-color: var(--cyan-light) var(--cyan-dark) var(--cyan-dark) var(--cyan-light);
    background: var(--cyan);
}

.sb.short i {
    flex: none;
    width: 30px;
    margin-left: 2px;
}

.sb.short .right {
    margin-left: auto;
}

.sb.part i {
    flex: none;
    height: 62%;
}

.sb.part .down {
    margin-top: auto;
}

.tri-face { fill: var(--green); }
.cyan .tri-face { fill: var(--cyan); }

.tri-light {
    fill: none;
    stroke: var(--cyan-light);
    stroke-width: 2;
}

.tri-dark {
    fill: none;
    stroke: var(--green-dark);
}

.list {
    flex: 1;
    min-width: 0;
    padding: 3px 3px 2px 2px;
    border: 2px solid;
    border-color: var(--green-dark) var(--green-light) var(--green-light) var(--green-dark);
}

.list li {
    height: 16px;
    margin-bottom: 2px;
    line-height: 16px;
    white-space: nowrap;
}

.list .sel {
    background: #000;
    color: var(--green);
}

.params {
    display: flex;
    height: 64px;
    border: 2px solid #000;
    border-width: 2px 2px 2px 1px;
}

.params .list {
    flex: none;
    width: 83px;
    border-color: var(--cyan-dark) var(--cyan-light) var(--cyan-light) var(--cyan-dark);
}

.params .sel {
    color: var(--cyan);
}

.params .sb {
    margin-left: 3px;
}

.resolution {
    flex: 1;
    min-width: 0;
    display: flex;
    flex-direction: column;
    padding: 0 2px;
    border-left: 1px solid #000;
}

.resolution label {
    text-align: center;
    line-height: 20px;
}

.resolution output {
    padding: 4px 0 0 5px;
}

.resolution input {
    height: 15px;
    border: 2px solid;
    border-color: var(--cyan-dark) var(--cyan-light) var(--cyan-light) var(--cyan-dark);
    background: #82b8b8;
}

.resolution input::-webkit-slider-thumb {
    appearance: none;
    width: 29px;
    height: 11px;
    border: 2px solid;
    border-color: var(--cyan-light) var(--cyan-dark) var(--cyan-dark) var(--cyan-light);
    background: linear-gradient(90deg, var(--cyan) 11px, var(--cyan-dark) 11px 12px, var(--cyan-light) 12px 14px, var(--cyan) 14px);
}

.sash {
    position: relative;
    height: 1px;
    margin: 3px 0 4px;
    background: var(--green-dark);
    box-shadow: 0 1px var(--green-light);
}

.sash i {
    position: absolute;
    right: 6px;
    top: -4px;
    width: 10px;
    height: 9px;
    border: 2px solid;
    border-color: var(--green-light) var(--green-dark) var(--green-dark) var(--green-light);
    background: var(--green);
}

.map {
    display: grid;
    place-items: center;
    height: 165px;
    border: 2px solid;
    border-color: var(--green-dark) var(--green-light) var(--green-light) var(--green-dark);
    outline: 1px solid #000;
    outline-offset: -3px;
}

.map svg {
    width: 84px;
    height: 122px;
}

.summary {
    display: flex;
    align-items: center;
    gap: 4px;
    padding: 1px 2px 0;
}

.summary p {
    flex: 1;
    padding-left: 2px;
    border: 1px solid #000;
    background: var(--cyan);
    line-height: 40px;
    margin: 0 -2px;
}

.close-row {
    display: flex;
    padding: 2px;
}

.close-row .btn {
    flex: 1;
    height: 23px;
}

.viewer {
    left: 1188px;
    top: 51px;
    width: 496px;
    border-color: #143c3c;
}

.check-name {
    display: flex;
    padding: 2px;
    border-top: 1px solid #000;
    border-bottom: 2px solid #000;
}

.check-name .btn {
    flex: 1;
    height: 23px;
    border-color: var(--green-light) var(--green-dark) var(--green-dark) var(--green-light);
    background: var(--green);
    font: bold 14px/18px var(--serif);
}

.columns {
    display: grid;
    grid-template-columns: 172px minmax(0, 1fr);
    border-bottom: 2px solid #000;
    background: var(--green);
}

.layer-col {
    display: flex;
    flex-direction: column;
    border-right: 2px solid #000;
}

.col-head {
    display: flex;
    align-items: stretch;
    height: 31px;
    padding-top: 2px;
    font-style: italic;
}

.layer-col .col-head {
    border-bottom: 1px solid #000;
}

.layer-col .col-head .btn {
    margin: 2px;
    padding: 0 2px;
    font-style: italic;
}

.layer-col .thin {
    font-weight: normal;
}

.col-head strong {
    flex: 1;
    border: solid #000;
    border-width: 0 2px;
    background: var(--cyan);
    text-align: center;
    line-height: 26px;
}

.list-row {
    flex: 1;
    display: flex;
    gap: 5px;
}

.layer-col > .sb {
    margin: 5px 19px 0 0;
}

.replace {
    padding: 2px 2px 2px 7px;
    border-top: 1px solid #000;
    margin-top: 2px;
}

.replace .opt {
    height: 28px;
}

.replace select {
    padding-left: 4px;
}

.cat-col {
    display: flex;
    flex-direction: column;
    min-width: 0;
    padding-left: 1px;
}

.cat-col .col-head .btn {
    width: 205px;
    font-style: italic;
}

.cat-col .col-head label {
    flex: 1;
    padding-left: 2px;
    font-style: normal;
    line-height: 28px;
    background: var(--cyan);
}

.cat-col .col-head .opt {
    width: 62px;
    font-style: normal;
}

.cat-col .col-head select {
    padding-left: 3px;
}

.cat-col .list {
    min-height: 342px;
    padding-top: 4px;
}

.cat-col > .sb {
    margin: 4px 20px 2px 0;
}

.steps {
    display: flex;
    gap: 3px;
    height: 26px;
}

.steps .btn {
    width: 45px;
    text-align: center;
    margin: 1px 0;
}

.steps .default {
    width: 55px;
    margin: 0;
    outline: 2px solid #000;
    outline-offset: -2px;
    border-width: 3px;
}

.steps label {
    padding: 4px 0 0 2px;
}

.steps input {
    flex: 1;
    min-width: 0;
    margin: 1px 2px;
    padding: 0 0 3px 5px;
    border: 2px solid;
    border-color: var(--green-dark) var(--green-light) var(--green-light) var(--green-dark);
    font-weight: normal;
}

.zoom-row {
    display: flex;
    height: 33px;
    margin-right: 2px;
}

.zoom-row .opt {
    width: 123px;
    padding: 2px 2px 2px 6px;
    border: 1px solid #000;
}

.zoom-row .opt select {
    padding-left: 4px;
}

.zoom-row > label {
    width: 28px;
    padding-left: 1px;
    line-height: 30px;
    border: 1px solid #000;
    border-right: 0;
    background: var(--cyan);
}

.zoom-row .green {
    width: 69px;
    padding-right: 2px;
    background: #28d228;
}

.zoom-row .green select {
    padding: 0;
    border-color: #aaf0aa #287828 #287828 #aaf0aa;
    background: #19eb19;
}

.zoom-row .green::after {
    border-color: #aaf0aa #287828 #287828 #aaf0aa;
}

.zoom-row .show {
    flex: 1;
    display: flex;
    align-items: center;
    gap: 4px;
    padding: 0 0 5px 4px;
    line-height: 18px;
    border: 0;
    background: none;
    white-space: nowrap;
}

.show input {
    width: 13px;
    height: 13px;
    border: 1px solid;
    border-color: var(--green-light) var(--green-dark) var(--green-dark) var(--green-light);
}

.cat-col .pair {
    justify-content: flex-end;
}

.result {
    line-height: 20px;
    text-align: center;
    white-space: pre;
    background: var(--green);
    border-bottom: 2px solid #000;
}

.erf {
    padding-left: 2px;
    line-height: 19px;
    border-bottom: 1px solid #000;
    background: var(--cream);
}

.foot {
    display: flex;
    justify-content: space-between;
    gap: 4px;
    padding: 1px;
}

.foot .btn {
    flex: 1;
    height: 31px;
}

/* input method bar */
.ime {
    position: absolute;
    right: 130px;
    bottom: 10px;
    display: flex;
    align-items: center;
    gap: 8px;
    height: 26px;
    padding: 0 4px 0 0;
    border: 1px solid #c8d2dc;
    background: #fff;
    color: #0a6bd6;
    font: bold 15px/16px "Noto Sans CJK SC", sans-serif;
}

.ime svg {
    width: 16px;
    height: 16px;
    fill: #0a6bd6;
}

.ime .ime-logo {
    width: 32px;
    height: 32px;
}

/* taskbar */
.taskbar {
    display: flex;
    align-items: stretch;
    height: 40px;
    background: #1b2b30;
    color: #fff;
    font: 12px/18px var(--ui);
}

.task-icon {
    width: 49px;
    display: grid;
    place-items: center;
}

.task-icon.wide {
    width: 59px;
}

.task-icon svg {
    width: 22px;
    height: 22px;
}

.task-icon:first-child svg {
    width: 16px;
    height: 16px;
}

.tasks {
    flex: 1;
    display: grid;
    grid-template-columns: repeat(10, 1fr);
    gap: 9px;
    padding-right: 2px;
}

.task {
    min-width: 0;
    display: flex;
    align-items: center;
    gap: 4px;
    padding: 2px 0 0 7px;
    border-bottom: 2px solid #76b9ed;
    white-space: nowrap;
}

.task svg {
    width: 23px;
    height: 23px;
}

.task.current {
    background: #48555a;
    box-shadow: -5px 0 #48555a, 4px 0 #48555a;
}

.tray {
    display: flex;
    align-items: center;
    gap: 8px;
    width: 316px;
    padding: 0 6px 0 8px;
}

.tray svg {
    width: 16px;
    height: 16px;
}

.tray span {
    font-size: 14px;
}

.tray span + svg {
    margin-left: 4px;
}

.tray b {
    width: 22px;
    height: 22px;
    margin: 0 4px 0 8px;
    border: 2px solid #14c864;
    border-radius: 50%;
    font-weight: normal;
    line-height: 18px;
    text-align: center;
}

.clock {
    width: 62px;
    text-align: center;
}

.tray .clock + svg {
    width: 18px;
    height: 18px;
    margin-left: 8px;
}
```
